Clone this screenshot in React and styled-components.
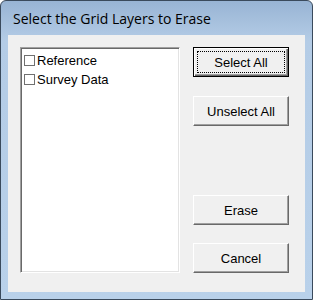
import React from 'react'
import styled, { createGlobalStyle } from 'styled-components'

const Global = createGlobalStyle`
  html, body { margin: 0; padding: 0; background: #ffffff; }
`

const layers = ['Reference', 'Survey Data']

export default function App() {
  return (
    <>
      <Global />
      <Window>
        <TitleBar>Select the Grid Layers to Erase</TitleBar>
        <Client>
          <ListBox>
            {layers.map((name) => (
              <Item key={name}>
                <Check />
                <Label>{name}</Label>
              </Item>
            ))}
          </ListBox>
          <Buttons>
            <Button $default>
              <Focus>Select All</Focus>
            </Button>
            <Button $gap={19}>Unselect All</Button>
            <Spacer />
            <Button>Erase</Button>
            <Button $gap={18}>Cancel</Button>
          </Buttons>
        </Client>
      </Window>
    </>
  )
}

const Window = styled.div`
  box-sizing: border-box;
  width: 313px;
  height: 300px;
  border: 1px solid #3a4a5c;
  border-radius: 6px 6px 0 0;
  background: linear-gradient(to bottom, #98b4d4 0px, #b4cce6 40px, #b9d1ea 100%);
  display: flex;
  flex-direction: column;
  padding: 0 7px 7px 7px;
`

const TitleBar = styled.div`
  height: 34px;
  flex-shrink: 0;
  display: flex;
  align-items: center;
  padding-left: 5px;
  padding-top: 1px;
  box-sizing: border-box;
  font-family: "Open Sans", "Noto Sans", sans-serif;
  font-size: 14px;
  color: #000;
`

const Client = styled.div`
  flex: 1;
  background: #f0f0f0;
  display: flex;
  padding: 12px 0 0 12px;
  font-family: "Liberation Sans", Arial, sans-serif;
  font-size: 13px;
  color: #000;
`

const ListBox = styled.div`
  box-sizing: border-box;
  width: 160px;
  height: 226px;
  background: #fff;
  border-top: 1px solid #a0a0a0;
  border-left: 1px solid #a0a0a0;
  border-right: 1px solid #fff;
  border-bottom: 1px solid #fff;
  box-shadow: inset 1px 1px 0 #696969, inset -1px -1px 0 #e3e3e3;
  padding: 3px 0 0 3px;
  display: flex;
  flex-direction: column;
`

const Item = styled.div`
  display: flex;
  align-items: center;
  height: 19px;
`

const Check = styled.span`
  box-sizing: border-box;
  width: 11px;
  height: 11px;
  border: 1px solid #707070;
  background: #fff;
  margin-right: 2px;
`

const Label = styled.span`
  line-height: 15px;
`

const Buttons = styled.div`
  display: flex;
  flex-direction: column;
  margin-left: 13px;
  width: 96px;
  height: 226px;
`

const Spacer = styled.div`
  flex: 1;
`

const Button = styled.div`
  box-sizing: border-box;
  height: 30px;
  margin-top: ${(p) => (p.$gap ? `${p.$gap}px` : '0')};
  background: #f0f0f0;
  display: flex;
  align-items: center;
  justify-content: center;
  border-top: 1px solid ${(p) => (p.$default ? '#000' : '#fff')};
  border-left: 1px solid ${(p) => (p.$default ? '#000' : '#fff')};
  border-right: 1px solid ${(p) => (p.$default ? '#000' : '#696969')};
  border-bottom: 1px solid ${(p) => (p.$default ? '#000' : '#696969')};
  box-shadow: ${(p) =>
    p.$default
      ? 'inset 1px 1px 0 #fff, inset -1px -1px 0 #696969, inset -2px -2px 0 #a0a0a0'
      : 'inset -1px -1px 0 #a0a0a0'};
  padding: ${(p) => (p.$default ? '3px' : '0')};
`

const Focus = styled.span`
  flex: 1;
  align-self: stretch;
  display: flex;
  align-items: center;
  justify-content: center;
  border: 1px dotted #000;
`
